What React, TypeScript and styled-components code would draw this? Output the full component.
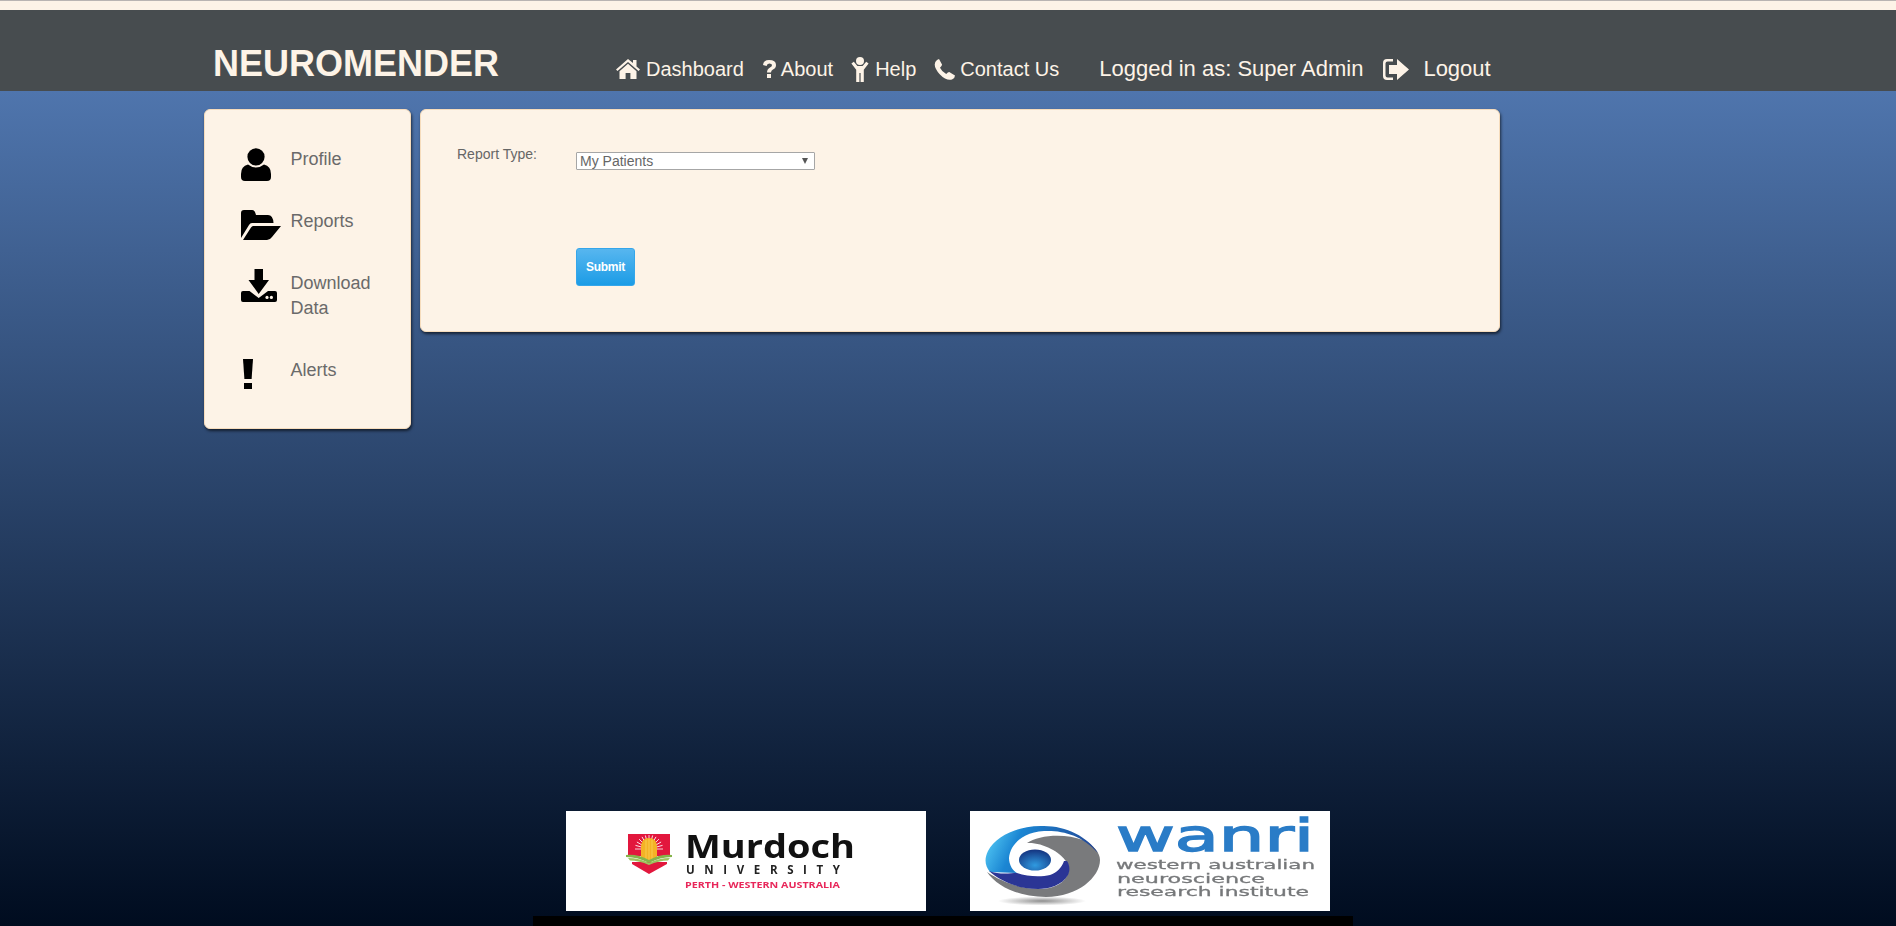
import React from 'react';
import styled, { createGlobalStyle } from 'styled-components';

const CREAM = '#fdf3e7';

const GlobalStyle = createGlobalStyle`
  html, body {
    margin: 0;
    padding: 0;
    height: 100%;
    overflow: hidden;
    font-family: "Liberation Sans", Arial, sans-serif;
    background: ${CREAM};
  }
`;

const HomeIcon = () => (
  <Glyph width="24" height="20" viewBox="0 0 24 20" fill="currentColor">
    <path d="M12 0 L0 10.5 L1.5 12 L12 3 L22.5 12 L24 10.5 L20.5 7.4 V1 H17 V4 Z" />
    <path d="M12 4.8 L3.5 12.2 V20 H9.6 V14 H14.4 V20 H20.5 V12.2 Z" />
  </Glyph>
);

const QuestionIcon = () => (
  <Glyph width="14" height="18" viewBox="0 0 14 18" fill="currentColor">
    <path d="M1 5 Q1.5 0 7 0 Q14 0 14 5 Q14 8 11 9.5 Q9 10.5 9 12.5 H5 Q5 9 8 7.5 Q10 6.5 10 5 Q10 3.4 7.2 3.4 Q5 3.4 4.6 6 Z" />
    <rect x="5" y="14" width="4" height="4" />
  </Glyph>
);

const HelpIcon = () => (
  <Glyph width="18" height="25" viewBox="0 0 18 25" fill="currentColor">
    <circle cx="9" cy="4" r="4" />
    <path d="M0.4 6.4 L2.8 4.8 L6.4 9 H11.6 L15.2 4.8 L17.6 6.4 L12.8 12.8 V25 H9.6 V16 H8.4 V25 H5.2 V12.8 Z" />
  </Glyph>
);

const PhoneIcon = () => (
  <Glyph width="21" height="21" viewBox="0 0 21 21" fill="currentColor">
    <path d="M5 0 L8 5.6 Q8.2 6.8 6 8.8 Q8 13 12.2 15 Q14 13 15.2 13 L21 16.4 Q21 19 18 20.4 Q15 21.6 11 19.5 Q5 16 2 10 Q-1 4 3 1 Z" />
  </Glyph>
);

const LogoutIcon = () => (
  <Glyph width="26" height="21" viewBox="0 0 26 21" fill="currentColor">
    <path d="M10 0 H4 Q0 0 0 4 V17 Q0 21 4 21 H10 V18.6 H4.6 Q2.5 18.6 2.5 16.5 V4.5 Q2.5 2.4 4.6 2.4 H10 Z" />
    <path d="M6 6 H14 V0 L26 10.5 L14 21 V15 H6 Z" />
  </Glyph>
);

const ProfileIcon = () => (
  <svg width="30" height="33" viewBox="0 0 30 33" fill="#000">
    <circle cx="15" cy="8.8" r="8.6" />
    <path d="M7 16.5 Q11 19.6 15 19.6 Q19 19.6 23 16.5 Q30 18 30 26 V29 Q30 33 26 33 H4 Q0 33 0 29 V26 Q0 18 7 16.5 Z" />
  </svg>
);

const ReportsIcon = () => (
  <svg width="40" height="30" viewBox="0 0 40 30" fill="#000">
    <path d="M0 3 Q0 0 3 0 H11 Q14 0 15 5 H27 Q32 5 32.5 13 H11 Q9 13 8 15 L0 28 Z" />
    <path d="M12 16 H40 L31 27 Q29 30 26 30 H2 L10 17.5 Q11 16 12 16 Z" />
  </svg>
);

const DownloadIcon = () => (
  <svg width="36" height="33" viewBox="0 0 36 33" fill="#000">
    <path d="M13.5 0 H22 V11 H28 L17.7 25 L7.5 11 H13.5 Z" />
    <path d="M0 24 Q0 22 2 22 H8.5 L17.7 29 L27 22 H34 Q36 22 36 24 V31 Q36 33 34 33 H2 Q0 33 0 31 Z" />
    <circle cx="26" cy="28.4" r="1.6" fill={CREAM} />
    <circle cx="30.4" cy="28.4" r="1.6" fill={CREAM} />
  </svg>
);

const AlertIcon = () => (
  <AlertSvg width="10" height="30" viewBox="0 0 10 30" fill="#000">
    <path d="M0 0 H10 L8.6 20 H1.4 Z" />
    <rect x="1" y="24" width="8" height="6" />
  </AlertSvg>
);

const rays = Array.from({ length: 13 }, (_, i) => (i * 180) / 12 - 90);

const MurdochLogo = () => (
  <svg width="360" height="100" viewBox="0 0 360 100">
    <path d="M62 23 H104 V45 H62 Z" fill="#e2173d" />
    <path d="M66 51 H101 V53 L83 63 L66 53 Z" fill="#e2173d" />
    {rays.map(angle => (
      <line key={angle} x1="83" y1="38" x2="83" y2="24" stroke="#fff" strokeWidth="0.8" transform={`rotate(${angle} 83 38)`} />
    ))}
    <path d="M75 47 V36 Q75 27 83 27 Q91 27 91 36 V47 Q83 54 75 47 Z" fill="#f4b326" />
    <path d="M80 29 V49 M83 28 V50 M86 29 V49" stroke="#fbd25a" strokeWidth="0.8" />
    <path d="M60 44 Q72 43 83 49 Q94 43 106 44 V46 Q94 46 83 52 Q72 46 60 46 Z" fill="#86b44a" />
    <path d="M62 47 Q73 47 83 52 Q93 47 104 47 L102 49.5 Q93 49.5 83 54 Q73 49.5 64 49.5 Z" fill="#9cc45e" />
    <LogoText x="119" y="47" fontSize="32" fontWeight="700" fill="#111" textLength="170" lengthAdjust="spacingAndGlyphs">
      Murdoch
    </LogoText>
    <LogoText x="120" y="63" fontSize="11.5" fontWeight="700" fill="#222" textLength="154">
      UNIVERSITY
    </LogoText>
    <LogoText x="119" y="77" fontSize="9.6" fontWeight="700" fill="#e8275a" textLength="155" lengthAdjust="spacingAndGlyphs">
      PERTH - WESTERN AUSTRALIA
    </LogoText>
  </svg>
);

const WanriLogo = () => (
  <svg width="360" height="100" viewBox="0 0 360 100">
    <defs>
      <linearGradient id="swirlBlue" x1="0" y1="0.4" x2="1" y2="0.6">
        <stop offset="0" stopColor="#4fc4f2" />
        <stop offset="0.25" stopColor="#1b86d3" />
        <stop offset="1" stopColor="#23408f" />
      </linearGradient>
      <radialGradient id="swirlDome" cx="0.5" cy="0.75" r="0.75">
        <stop offset="0" stopColor="#2f9ae0" />
        <stop offset="1" stopColor="#14337f" />
      </radialGradient>
      <radialGradient id="swirlShadow">
        <stop offset="0" stopColor="#8f8f8f" />
        <stop offset="1" stopColor="#ffffff" />
      </radialGradient>
    </defs>
    <ellipse cx="72" cy="90" rx="44" ry="4.5" fill="url(#swirlShadow)" />
    <path d="M57 32 C68 24 95 22 113 29 C124 34 130 42 130 49 C130 66 108 86 76 86 C50 86 27 76 17 61 C30 70 50 78 70 78 C88 78 99 68 99 57 C99 54 97 51 95 49 C90 41 72 31 57 32 Z" fill="#797a7c" />
    <path d="M128 42 C112 24 92 19 74 20 C52 21 40 34 39 47 C39 54 43 60 47 62 L20 61 C15 55 14 48 18 40 C26 24 50 14 74 15 C96 15 118 26 128 42 Z" fill="url(#swirlBlue)" />
    <path d="M19 60 C30 64 40 62 47 62 C58 66 72 66 80 64 C87 62 92 56 94 50 L97 50 C100 54 100 60 98 64 C92 74 80 78 68 78 C48 78 30 70 19 60 Z" fill="#2b3595" />
    <ellipse cx="65" cy="49" rx="16" ry="10.5" fill="url(#swirlDome)" />
    <LogoText x="146" y="40" fontSize="44" fill="#2a7cc7" stroke="#2a7cc7" strokeWidth="1.4" textLength="198" lengthAdjust="spacingAndGlyphs" $wide>
      wanri
    </LogoText>
    <LogoText x="146" y="58" fontSize="13" fill="#76787a" stroke="#76787a" strokeWidth="0.3" textLength="199" lengthAdjust="spacingAndGlyphs" $wide>
      western australian
    </LogoText>
    <LogoText x="147" y="72" fontSize="13" fill="#76787a" stroke="#76787a" strokeWidth="0.3" textLength="148" lengthAdjust="spacingAndGlyphs" $wide>
      neuroscience
    </LogoText>
    <LogoText x="147" y="85" fontSize="13" fill="#76787a" stroke="#76787a" strokeWidth="0.3" textLength="192" lengthAdjust="spacingAndGlyphs" $wide>
      research institute
    </LogoText>
  </svg>
);

const navItems = [
  { label: 'Dashboard', icon: <HomeIcon />, gap: 6, after: 18 },
  { label: 'About', icon: <QuestionIcon />, gap: 5, after: 18 },
  { label: 'Help', icon: <HelpIcon />, gap: 6, after: 18 },
  { label: 'Contact Us', icon: <PhoneIcon />, gap: 5, after: 40 },
];

const sideItems = [
  { label: 'Profile', icon: <ProfileIcon />, top: 1 },
  { label: 'Reports', icon: <ReportsIcon />, top: 1 },
  { label: 'Download Data', icon: <DownloadIcon />, top: -2 },
  { label: 'Alerts', icon: <AlertIcon />, top: 1 },
];

const App: React.FC = () => {
  return (
    <>
      <GlobalStyle />
      <Page>
        <TopStrip />
        <Header>
          <Title>NEUROMENDER</Title>
          <Nav>
            {navItems.map(item => (
              <NavLink key={item.label} href="#" $gap={item.gap} $after={item.after}>
                {item.icon}
                {item.label}
              </NavLink>
            ))}
            <UserName>Logged in as: Super Admin</UserName>
            <LogoutLink href="#">
              <LogoutIcon />
              Logout
            </LogoutLink>
          </Nav>
        </Header>
        <Content>
          <Columns>
            <Sidebar>
              {sideItems.map(item => (
                <SideLink key={item.label} href="#">
                  <SideIcon $top={item.top}>{item.icon}</SideIcon>
                  <span>{item.label}</span>
                </SideLink>
              ))}
            </Sidebar>
            <Panel>
              <FormRow>
                <FieldLabel htmlFor="reportType">Report Type:</FieldLabel>
                <SelectWrap>
                  <ReportSelect id="reportType" defaultValue="mine">
                    <option value="mine">My Patients</option>
                    <option value="all">All Patients</option>
                  </ReportSelect>
                </SelectWrap>
              </FormRow>
              <SubmitButton type="button">Submit</SubmitButton>
            </Panel>
          </Columns>
          <Footer>
            <Logos>
              <LogoBox><MurdochLogo /></LogoBox>
              <LogoBox><WanriLogo /></LogoBox>
            </Logos>
            <FooterBar />
          </Footer>
        </Content>
      </Page>
    </>
  );
};

export default App;

const Page = styled.div`
  display: flex;
  flex-direction: column;
  height: 926px;
  overflow: hidden;
`;

const TopStrip = styled.div`
  height: 9px;
  flex: none;
  background: ${CREAM};
  border-top: 1px solid #b9b4b2;
`;

const Header = styled.header`
  flex: none;
  box-sizing: border-box;
  height: 81px;
  padding: 34px 0 0 213px;
  display: flex;
  align-items: baseline;
  gap: 117px;
  background: #474c4f;
  color: ${CREAM};
`;

const Title = styled.h1`
  margin: 0;
  font-size: 36px;
  line-height: 40px;
  font-weight: 700;
`;

const Nav = styled.nav`
  display: flex;
  align-items: baseline;
`;

const NavLink = styled.a<{ $gap: number; $after: number }>`
  display: flex;
  align-items: baseline;
  gap: ${p => p.$gap}px;
  margin-right: ${p => p.$after}px;
  font-size: 20px;
  line-height: 24px;
  color: ${CREAM};
  text-decoration: none;
`;

const Glyph = styled.svg`
  align-self: center;
  flex: none;
`;

const UserName = styled.span`
  font-size: 22px;
  line-height: 24px;
  margin-right: 20px;
`;

const LogoutLink = styled.a`
  display: flex;
  align-items: baseline;
  gap: 14px;
  font-size: 22px;
  line-height: 24px;
  color: ${CREAM};
  text-decoration: none;
`;

const Content = styled.main`
  flex: 1;
  display: flex;
  flex-direction: column;
  justify-content: space-between;
  background: linear-gradient(to bottom, #4f75ad 0%, #000c1f 100%);
`;

const Columns = styled.div`
  display: flex;
  align-items: flex-start;
  gap: 9px;
  margin: 18px 0 0 204px;
`;

const Card = styled.div`
  box-sizing: border-box;
  background: ${CREAM};
  border: 1px solid #f6dcbc;
  border-radius: 6px;
  box-shadow: 1px 2px 3px rgba(0, 0, 0, 0.6);
`;

const Sidebar = styled(Card)`
  width: 207px;
  height: 320px;
  padding: 37px 20px 0 36px;
  display: flex;
  flex-direction: column;
  gap: 37px;
`;

const SideLink = styled.a`
  display: flex;
  font-size: 18px;
  line-height: 25px;
  color: #6a6a6a;
  text-decoration: none;
`;

const SideIcon = styled.span<{ $top: number }>`
  flex: none;
  width: 49.5px;
  height: 0;
  margin-top: ${p => p.$top}px;
  line-height: 0;
`;

const AlertSvg = styled.svg`
  margin-left: 2px;
`;

const Panel = styled(Card)`
  width: 1080px;
  height: 223px;
  padding: 36px 0 0 36px;
`;

const FormRow = styled.div`
  display: flex;
  align-items: flex-start;
`;

const FieldLabel = styled.label`
  width: 119px;
  font-size: 14px;
  line-height: 16px;
  color: #666;
`;

const SelectWrap = styled.div`
  position: relative;
  margin-top: 6px;
  width: 239px;
  height: 18px;

  &::after {
    content: '';
    position: absolute;
    right: 7px;
    top: 6px;
    border-left: 3.5px solid transparent;
    border-right: 3.5px solid transparent;
    border-top: 6px solid #555;
    pointer-events: none;
  }
`;

const ReportSelect = styled.select`
  appearance: none;
  box-sizing: border-box;
  display: block;
  width: 100%;
  height: 100%;
  padding: 0 0 0 3px;
  background: #fff;
  border: 1px solid #a6a6a6;
  border-radius: 1px;
  font-family: inherit;
  font-size: 14px;
  line-height: 16px;
  color: #666;
`;

const SubmitButton = styled.button`
  display: block;
  box-sizing: border-box;
  width: 59px;
  height: 38px;
  margin: 78px 0 0 119px;
  padding: 0;
  background: linear-gradient(to bottom, #57b6ef, #1c9ce6);
  border: 1px solid #35a6ea;
  border-radius: 3px;
  font-family: inherit;
  font-size: 12px;
  font-weight: 700;
  letter-spacing: -0.25px;
  color: #fff;
  cursor: pointer;
`;

const Footer = styled.footer`
  width: 820px;
  margin-left: 533px;
`;

const Logos = styled.div`
  display: flex;
  gap: 44px;
  padding-left: 33px;
`;

const LogoBox = styled.div`
  width: 360px;
  height: 100px;
  background: #fff;
  line-height: 0;

  svg {
    filter: blur(0.35px);
  }
`;

const LogoText = styled.text<{ $wide?: boolean }>`
  font-family: ${p => (p.$wide ? '"DejaVu Sans"' : '"Open Sans"')}, sans-serif;
`;

const FooterBar = styled.div`
  height: 10px;
  margin-top: 5px;
  background: #000;
`;
